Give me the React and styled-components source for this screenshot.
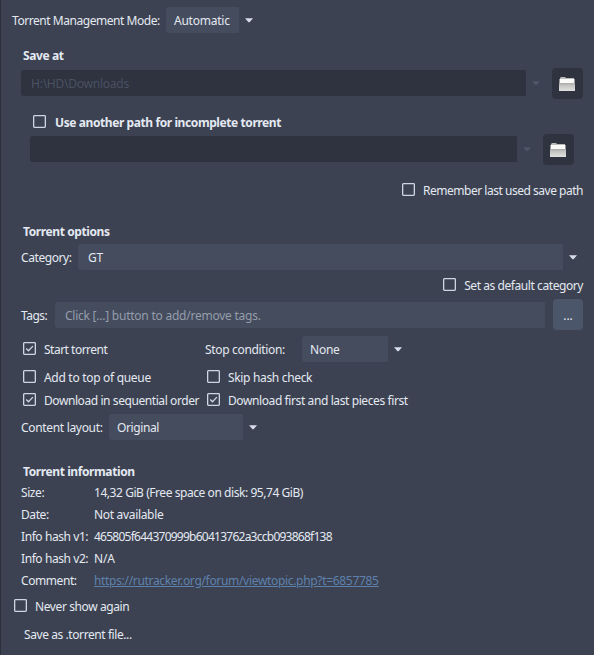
import styled, { createGlobalStyle } from "styled-components";

const info = [
  {
    label: "Size:",
    value: "14,32 GiB (Free space on disk: 95,74 GiB)",
    spacing: -0.44,
  },
  { label: "Date:", value: "Not available", spacing: -0.32 },
  {
    label: "Info hash v1:",
    value: "465805f644370999b60413762a3ccb093868f138",
    spacing: -0.75,
  },
  { label: "Info hash v2:", value: "N/A", spacing: -0.2 },
  {
    label: "Comment:",
    value: "https://rutracker.org/forum/viewtopic.php?t=6857785",
    spacing: -0.32,
    link: true,
  },
];

function Check({ label, checked, bold, gap, spacing }) {
  return (
    <CheckLabel $gap={gap}>
      <Box viewBox="0 0 13 13">
        <rect x="0.65" y="0.65" width="11.7" height="11.7" rx="0.8" />
        {checked && <path d="M3.2 6.5 L5.5 8.8 L9.9 4.1" />}
      </Box>
      <CheckText $bold={bold} $spacing={spacing}>
        {label}
      </CheckText>
    </CheckLabel>
  );
}

function Arrow({ disabled }) {
  return (
    <ArrowIcon viewBox="0 0 8 5" $disabled={disabled}>
      <path d="M0 0.3 H8 L4.5 4.3 H3.5 Z" />
    </ArrowIcon>
  );
}

function FolderButton() {
  return (
    <BrowseButton>
      <svg width="16" height="14" viewBox="0 0 16 14">
        <defs>
          <linearGradient id="folder" x1="0" y1="0" x2="0" y2="1">
            <stop offset="0" stopColor="#a9a9a8" />
            <stop offset="0.35" stopColor="#c6c6c4" />
            <stop offset="1" stopColor="#e0e0de" />
          </linearGradient>
        </defs>
        <path d="M2 0 H6 L7 1 H15 V3 H1 V1 Z" fill="#b9bab9" />
        <path d="M0.5 2 H15.5 V7 H0.5 Z" fill="#fafaf8" />
        <path d="M0 6 H16 V13.5 Q16 14 15.5 14 H0.5 Q0 14 0 13.5 Z" fill="url(#folder)" />
      </svg>
    </BrowseButton>
  );
}

export default function App() {
  return (
    <>
      <GlobalStyle />
      <Dialog>
        <ModeRow>
          <RowLabel $width={154} $spacing={-0.45}>
            Torrent Management Mode:
          </RowLabel>
          <Field $width={73} $indent={8}>
            Automatic
          </Field>
          <Arrow />
        </ModeRow>

        <Title $top={13}>Save at</Title>
        <PathRow $top={2} $left={21}>
          <Field $width={505} $indent={10} $disabled>
            H:\HD\Downloads
          </Field>
          <Arrow disabled />
          <FolderButton />
        </PathRow>
        <CheckRow $top={13} $left={33}>
          <Check
            label="Use another path for incomplete torrent"
            bold
            gap={9}
            spacing={-0.41}
          />
        </CheckRow>
        <PathRow $top={3} $left={30}>
          <Field $width={487} $indent={10} $disabled />
          <Arrow disabled />
          <FolderButton />
        </PathRow>
        <CheckRow $top={15} $end>
          <Check label="Remember last used save path" spacing={-0.48} />
        </CheckRow>

        <Title $top={23}>Torrent options</Title>
        <Row $top={2}>
          <RowLabel $width={57} $spacing={-0.42}>
            Category:
          </RowLabel>
          <Field $width={485} $indent={10}>
            GT
          </Field>
          <Arrow />
        </Row>
        <CheckRow $top={5} $end>
          <Check label="Set as default category" spacing={-0.43} />
        </CheckRow>
        <TagsRow>
          <RowLabel $width={34} $spacing={-0.5}>
            Tags:
          </RowLabel>
          <Field $width={490} $indent={10} $placeholder>
            Click [...] button to add/remove tags.
          </Field>
          <DotsButton>...</DotsButton>
        </TagsRow>

        <Options>
          <OptionRow $height={26}>
            <Check label="Start torrent" checked spacing={-0.5} />
            <StopCondition>
              <RowLabel $width={97} $spacing={-0.33}>
                Stop condition:
              </RowLabel>
              <Field $width={86} $indent={8}>
                None
              </Field>
              <Arrow />
            </StopCondition>
          </OptionRow>
          <OptionRow $height={30}>
            <Check label="Add to top of queue" spacing={-0.3} />
            <Check label="Skip hash check" spacing={-0.33} />
          </OptionRow>
          <OptionRow $height={16}>
            <Check label="Download in sequential order" checked spacing={-0.42} />
            <Check
              label="Download first and last pieces first"
              checked
              spacing={-0.4}
            />
          </OptionRow>
        </Options>
        <Row $top={6}>
          <RowLabel $width={88} $spacing={-0.32}>
            Content layout:
          </RowLabel>
          <Field $width={134} $indent={8} $spacing={-0.4}>
            Original
          </Field>
          <Arrow />
        </Row>

        <Title $top={22}>Torrent information</Title>
        {info.map((row) => (
          <InfoRow key={row.label}>
            <Text $width={73} $spacing={-0.42}>
              {row.label}
            </Text>
            {row.link ? (
              <Link $spacing={row.spacing}>{row.value}</Link>
            ) : (
              <Text $spacing={row.spacing}>{row.value}</Text>
            )}
          </InfoRow>
        ))}
        <CheckRow $top={4} $left={14}>
          <Check label="Never show again" spacing={-0.4} />
        </CheckRow>
        <SaveButton>Save as .torrent file...</SaveButton>
      </Dialog>
    </>
  );
}

const GlobalStyle = createGlobalStyle`
  * {
    box-sizing: border-box;
  }
  body {
    margin: 0;
    background: #3c4252;
  }
`;
const Dialog = styled.main`
  width: 594px;
  height: 655px;
  padding-top: 7px;
  overflow: hidden;
  background: #3c4252;
  border-left: 1px solid #2b303b;
  font-family: "Noto Sans", "Open Sans", sans-serif;
  font-size: 12px;
  line-height: 16px;
  color: #e4e9f1;
  white-space: nowrap;
`;
const Row = styled.div`
  display: flex;
  align-items: center;
  height: 26px;
  margin-top: ${({ $top }) => $top || 0}px;
  padding-left: 20px;
`;
const ModeRow = styled(Row)`
  padding-left: 11px;
`;
const PathRow = styled.div`
  display: flex;
  align-items: center;
  height: 31px;
  margin-top: ${({ $top }) => $top}px;
  padding-left: ${({ $left }) => $left - 1}px;
`;
const CheckRow = styled.div`
  display: flex;
  align-items: center;
  justify-content: ${({ $end }) => ($end ? "flex-end" : "flex-start")};
  height: 19px;
  margin-top: ${({ $top }) => $top}px;
  padding-left: ${({ $left }) => ($left ? $left - 1 : 0)}px;
  padding-right: 11px;
`;
const TagsRow = styled(PathRow)`
  margin-top: 5px;
  padding-left: 20px;
`;
const Title = styled.h2`
  height: 20px;
  margin: ${({ $top }) => $top}px 0 0 22px;
  font-size: 12px;
  font-weight: 700;
  line-height: 20px;
  letter-spacing: -0.4px;
`;
const Text = styled.span`
  flex: none;
  width: ${({ $width }) => ($width ? `${$width}px` : "auto")};
  letter-spacing: ${({ $spacing }) => $spacing}px;
`;
const RowLabel = styled(Text)`
  padding-top: 2px;
`;
const Field = styled.div`
  flex: none;
  width: ${({ $width }) => $width}px;
  height: 26px;
  margin-bottom: ${({ $disabled }) => ($disabled ? 1 : 0)}px;
  padding-left: ${({ $indent }) => $indent}px;
  border-radius: 3px 1px 1px 3px;
  background: ${({ $disabled }) => ($disabled ? "#2e333f" : "#444c5e")};
  color: ${({ $disabled, $placeholder }) =>
    $disabled ? "#4a5163" : $placeholder ? "#959daa" : "#e4e9f1"};
  line-height: 27px;
  letter-spacing: ${({ $spacing }) => $spacing ?? -0.24}px;
`;
const ArrowIcon = styled.svg`
  flex: none;
  width: 8px;
  height: 5px;
  margin-left: 6px;
  fill: ${({ $disabled }) => ($disabled ? "#4e5668" : "#d8dee9")};
`;
const BrowseButton = styled.button`
  display: flex;
  align-items: center;
  justify-content: center;
  width: 31px;
  height: 31px;
  margin-left: 12px;
  padding: 0 1px 0 0;
  border: 0;
  border-radius: 4px;
  background: #2e333f;
`;
const DotsButton = styled.button`
  width: 30px;
  height: 31px;
  margin-left: 8px;
  padding: 3px 0 0;
  border: 0;
  border-radius: 4px;
  background: #4c566a;
  color: #e4e9f1;
  font: inherit;
`;
const CheckLabel = styled.label`
  display: flex;
  align-items: center;
  gap: ${({ $gap }) => $gap || 8}px;
  height: 19px;
`;
const Box = styled.svg`
  flex: none;
  width: 13px;
  height: 13px;
  fill: none;
  stroke: #d0d6e1;
  stroke-width: 1.3;
`;
const CheckText = styled.span`
  padding-top: 3px;
  font-weight: ${({ $bold }) => ($bold ? 700 : 400)};
  letter-spacing: ${({ $spacing }) => $spacing}px;
`;
const Options = styled.div`
  margin-top: 6px;
  padding-left: 22px;
`;
const OptionRow = styled.div`
  display: grid;
  grid-template-columns: 184px 1fr;
  grid-template-rows: 100%;
  align-items: center;
  height: ${({ $height }) => $height}px;

  > ${CheckLabel} {
    margin-bottom: 1px;
  }
`;
const StopCondition = styled.div`
  display: flex;
  align-items: center;
  margin-left: -2px;
`;
const InfoRow = styled.div`
  display: flex;
  align-items: center;
  height: 22px;
  padding-left: 20px;
`;
const Link = styled.a`
  color: #5e81ac;
  letter-spacing: ${({ $spacing }) => $spacing}px;
  text-decoration: underline;
`;
const SaveButton = styled.button`
  display: block;
  margin: 12px 0 0 23px;
  padding: 0;
  border: 0;
  background: none;
  color: #e4e9f1;
  font: inherit;
  letter-spacing: -0.42px;
`;
